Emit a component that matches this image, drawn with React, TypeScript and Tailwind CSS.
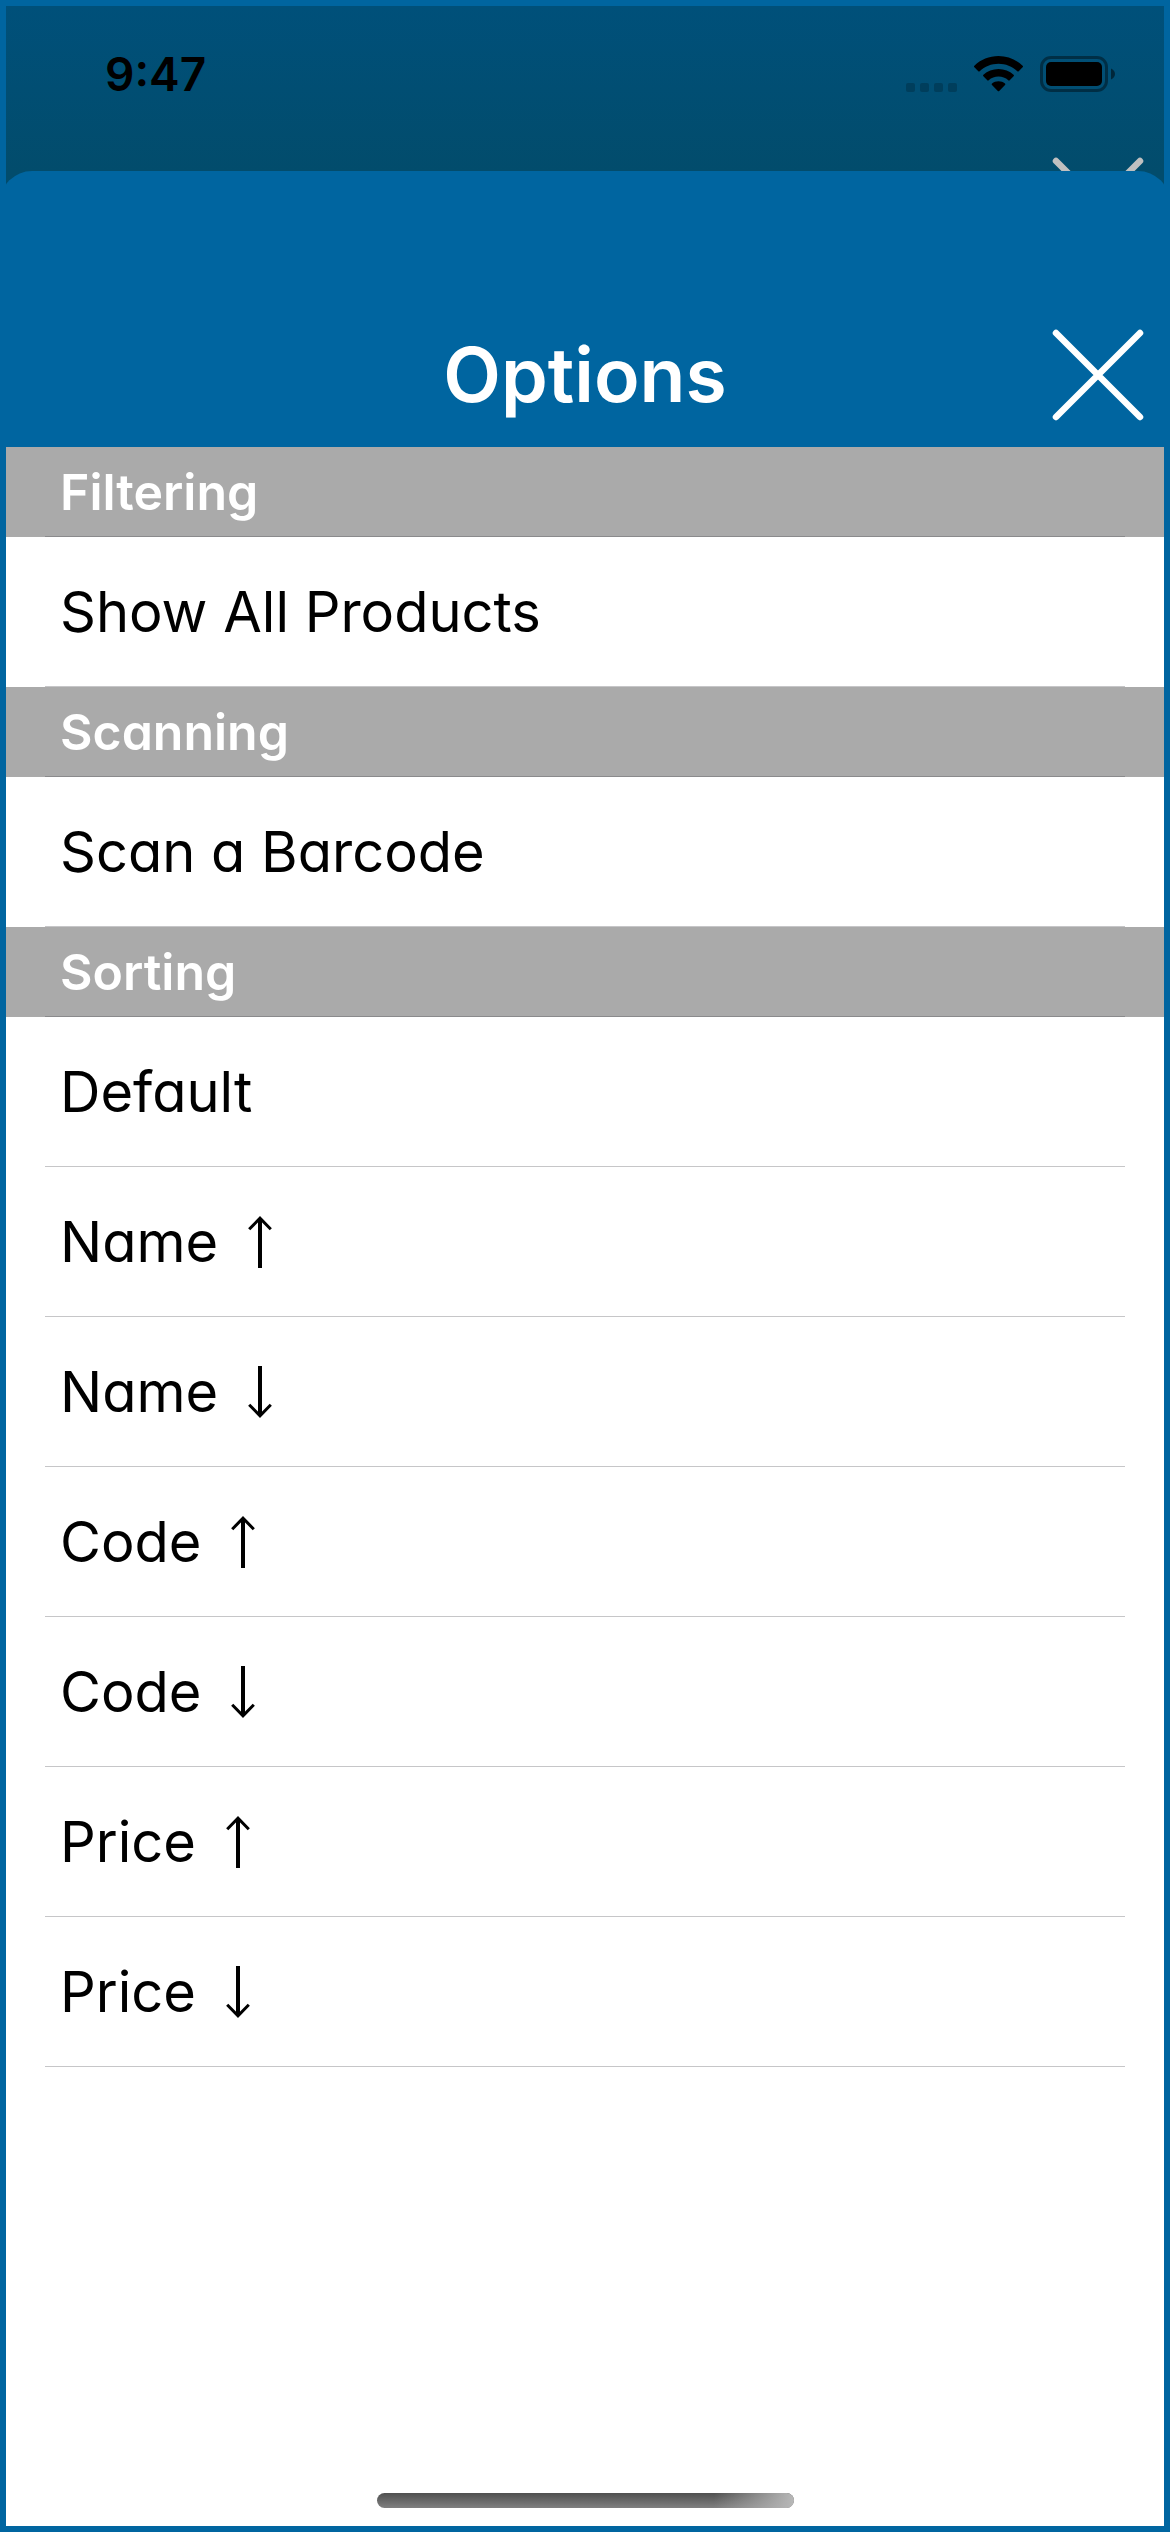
import React from "react";

type Arrow = "up" | "down";
type Option = { label: string; arrow?: Arrow };
type Section = { title: string; options: Option[] };

const sections: Section[] = [
  { title: "Filtering", options: [{ label: "Show All Products" }] },
  { title: "Scanning", options: [{ label: "Scan a Barcode" }] },
  {
    title: "Sorting",
    options: [
      { label: "Default" },
      { label: "Name", arrow: "up" },
      { label: "Name", arrow: "down" },
      { label: "Code", arrow: "up" },
      { label: "Code", arrow: "down" },
      { label: "Price", arrow: "up" },
      { label: "Price", arrow: "down" },
    ],
  },
];

function CrossIcon({ className }: { className: string }) {
  return (
    <svg viewBox="0 0 92 92" className={className} fill="none" stroke="currentColor" strokeWidth="6.5" strokeLinecap="round" aria-hidden="true">
      <path d="M4 4 88 88M88 4 4 88" />
    </svg>
  );
}

function ArrowIcon({ direction }: { direction: Arrow }) {
  return (
    <svg
      viewBox="0 0 24 52"
      className="h-[52px] w-6"
      fill="none"
      stroke="currentColor"
      role="img"
      aria-label={direction === "up" ? "ascending" : "descending"}
    >
      {direction === "up" ? (
        <>
          <path d="M12 2V52" strokeWidth="4" />
          <path d="M1.200 13.200 12 2.200 22.800 13.200" strokeWidth="3" />
        </>
      ) : (
        <>
          <path d="M12 0V50" strokeWidth="4" />
          <path d="M1.200 38.800 12 49.800 22.800 38.800" strokeWidth="3" />
        </>
      )}
    </svg>
  );
}

function SignalDots() {
  return (
    <div className="flex gap-[5px]">
      {[0, 1, 2, 3].map((n) => (
        <span key={n} className="size-[9px] rounded-[2px] bg-black/20" />
      ))}
    </div>
  );
}

function WifiIcon() {
  return (
    <svg viewBox="0 0 49 36" className="h-9 w-[49px]" aria-hidden="true">
      <path d="M24.5 0C15.300 0 6.600 3.600.4 9.700a1 1 0 0 0 0 1.500L4.300 15.200a1 1 0 0 0 1.400 0C10.800 10.500 17.400 7.800 24.500 7.800s13.700 2.700 18.800 7.400a1 1 0 0 0 1.400 0l3.900-4a1 1 0 0 0 0-1.500C42.400 3.600 33.700 0 24.500 0Z" />
      <path d="M24.500 13C18.700 13 13.400 15.200 9.400 18.800a1 1 0 0 0 0 1.500l3.900 4a1 1 0 0 0 1.400 0c2.700-2.400 6.100-3.700 9.800-3.700s7.100 1.300 9.800 3.700a1 1 0 0 0 1.400 0l3.900-4a1 1 0 0 0 0-1.500C35.600 15.200 30.300 13 24.500 13Z" />
      <path d="M24.500 25.200c-2.500 0-4.700.8-6.500 2.200a1 1 0 0 0 0 1.500l5.800 6a1 1 0 0 0 1.400 0l5.800-6a1 1 0 0 0 0-1.500c-1.800-1.400-4-2.200-6.500-2.200Z" />
    </svg>
  );
}

function BatteryIcon() {
  return (
    <svg viewBox="0 0 75 36" className="h-9 w-[75px]" aria-hidden="true">
      <rect x="1.500" y="1.500" width="65" height="33" rx="9.500" fill="none" stroke="#000" strokeOpacity="0.4" strokeWidth="3" />
      <rect x="6" y="6" width="56" height="24" rx="5" />
      <path d="M71 12.500c2.400.9 4 3 4 5.500s-1.600 4.600-4 5.500Z" fillOpacity="0.5" />
    </svg>
  );
}

function StatusBar() {
  return (
    <div className="relative h-[165px] shrink-0 bg-linear-to-b from-[#00507a] to-[#024c6c]">
      <div className="flex items-center justify-between pt-10 pr-[49px] pl-[99px]">
        <time className="text-[46px] leading-[56px] font-semibold">9:47</time>
        <div className="flex items-end gap-[17px]">
          <SignalDots />
          <WifiIcon />
          <BatteryIcon />
        </div>
      </div>
      <CrossIcon className="absolute top-[151px] right-[20px] size-[92px] text-[#c0c0c0]" />
    </div>
  );
}

function OptionRow({ label, arrow }: Option) {
  return (
    <li>
      <button type="button" className="flex h-[150px] w-full flex-col text-left">
        <span className="flex flex-1 items-center gap-[30px] pl-[54px] text-[56px] leading-[80px]">
          {label}
          {arrow && <ArrowIcon direction={arrow} />}
        </span>
        <span className="mx-[39px] block h-px self-stretch bg-[#c6c6c8]" />
      </button>
    </li>
  );
}

export default function App() {
  return (
    <div className="flex min-h-screen flex-col overflow-hidden border-[6px] border-[#0065a0] bg-[#024c6c] font-['Inter','Liberation_Sans',sans-serif] text-black [font-feature-settings:'cv11']">
      <StatusBar />
      <main className="relative -mx-[6px] flex flex-1 flex-col rounded-t-[32px] bg-[#0065a0] px-[6px]">
        <header className="flex h-[276px] items-end justify-center">
          <h1 className="pb-[28px] text-[75px] leading-[88px] font-semibold text-white">Options</h1>
          <button type="button" aria-label="Close" className="absolute top-[158px] right-[26px] text-white">
            <CrossIcon className="size-[92px]" />
          </button>
        </header>
        <div className="flex flex-1 flex-col bg-white">
          {sections.map((section) => (
            <section key={section.title}>
              <div className="flex h-[90px] flex-col bg-[#aaaaaa]">
                <h2 className="flex flex-1 items-center pl-[54px] text-[50px] leading-[60px] font-semibold text-white">{section.title}</h2>
                <span className="mx-[39px] block h-px bg-[#8a8a8c]" />
              </div>
              <ul>
                {section.options.map((option) => (
                  <OptionRow key={option.label + (option.arrow ?? "")} {...option} />
                ))}
              </ul>
            </section>
          ))}
          <div className="mx-auto mt-auto mb-[18px] h-[15px] w-[417px] overflow-hidden rounded-full bg-linear-to-b from-[#505050] to-[#808080]">
            <div className="ml-auto h-full w-[80px] bg-linear-to-r from-transparent to-[#b8b8b8]" />
          </div>
        </div>
      </main>
    </div>
  );
}
